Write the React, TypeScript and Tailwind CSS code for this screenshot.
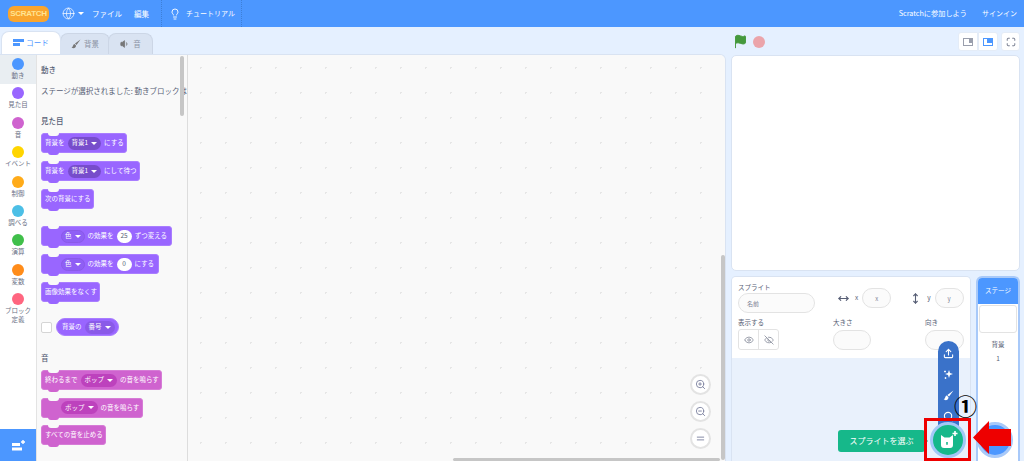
import { Globe, Lightbulb, Upload, Search, Eye, EyeOff, Maximize, ZoomIn, ZoomOut, Equal, Volume1, MoveHorizontal, MoveVertical, Flag } from "lucide-react";
import type { ReactNode } from "react";

const categories = [
  { label: "動き", color: "bg-[#4c97ff]", active: true },
  { label: "見た目", color: "bg-[#9966ff]" },
  { label: "音", color: "bg-[#cf63cf]" },
  { label: "イベント", color: "bg-[#ffd500]" },
  { label: "制御", color: "bg-[#ffab19]" },
  { label: "調べる", color: "bg-[#4cbfe6]" },
  { label: "演算", color: "bg-[#40bf4a]" },
  { label: "変数", color: "bg-[#ff8c1a]" },
  { label: "ブロック定義", color: "bg-[#ff6680]" },
];

const Caret = () => (
  <span className="ml-[3px] inline-block h-0 w-0 border-x-[3px] border-t-[3px] border-x-transparent border-t-white" />
);

const Pill = ({ children, dark }: { children: ReactNode; dark: string }) => (
  <span className={`mx-[3px] flex h-[13px] items-center rounded-full ${dark}`}>
    {children}
    <Caret />
  </span>
);

const Num = ({ children }: { children: ReactNode }) => (
  <span className="mx-[3px] flex h-[13px] min-w-[15px] items-center justify-center rounded-full bg-white px-1 text-[#575e75]">
    {children}
  </span>
);

// stack block with the top notch and the bottom bump
const Block = ({
  width,
  bg,
  border,
  children,
  indent,
}: {
  width: string;
  bg: string;
  border: string;
  children: ReactNode;
  indent?: boolean;
}) => (
  <div className={`relative flex h-5 items-center rounded-[3px] border text-[6.5px] text-white ${width} ${bg} ${border} ${indent ? "pl-[16px]" : "pl-[3px]"}`}>
    <span className="absolute left-[6px] top-[-1px] h-[3px] w-[11px] rounded-b-[3px] bg-[#f9f9f9]" />
    <span className={`absolute bottom-[-3px] left-[6px] h-[3px] w-[11px] rounded-b-[3px] ${bg}`} />
    <span className="flex items-center whitespace-nowrap">{children}</span>
  </div>
);

const purple = { bg: "bg-[#9966ff]", border: "border-[#a97dff]" };
const pink = { bg: "bg-[#cf63cf]", border: "border-[#d67cd6]" };

const Field = ({ w, label }: { w: string; label?: string }) => (
  <div className={`flex h-[20px] items-center justify-center rounded-full border border-[#e3e3e3] bg-[#fbfbfb] text-[6px] text-[#7b8194] ${w}`}>
    {label}
  </div>
);

const MenuIcon = ({ children }: { children: ReactNode }) => (
  <div className="flex h-[21px] items-center justify-center text-white">{children}</div>
);

export default function App() {
  return (
    <div className="relative flex h-[461px] w-[1024px] flex-col overflow-hidden bg-[#e5f0ff] font-['Noto_Sans_CJK_JP','Noto_Sans',sans-serif] text-[7px] text-[#575e75]">
      {/* Header */}
      <header className="flex h-[27px] shrink-0 items-center bg-[#4c97ff] pl-2 pr-[7px] text-[7.5px] text-white">
        <div className="flex h-[16px] w-[41px] items-center justify-center rounded-[6px] bg-[#f9a52e] font-['Liberation_Sans',sans-serif] text-[8px] font-bold leading-none tracking-[-0.3px] text-[#ffe493]">
          SCRATCH
        </div>
        <Globe size={13} strokeWidth={1.3} className="ml-[13px]" />
        <span className="ml-[3px] h-0 w-0 border-x-[3px] border-t-[3px] border-x-transparent border-t-white" />
        <span className="ml-[8px]">ファイル</span>
        <span className="ml-[12px]">編集</span>
        <span className="ml-[12px] h-full border-l border-dotted border-[#3d7fd8]" />
        <Lightbulb size={12} strokeWidth={1.8} className="ml-[7px]" />
        <span className="ml-[5px] text-[7px]">チュートリアル</span>
        <span className="ml-[6px] h-full border-l border-dotted border-[#3d7fd8]" />
        <span className="ml-auto text-[7.2px]">Scratchに参加しよう</span>
        <span className="ml-[15px] text-[7px]">サインイン</span>
      </header>

      <div className="flex min-h-0 flex-1">
        {/* Left side: tabs + editor */}
        <div className="flex w-[726px] shrink-0 flex-col">
          <div className="flex h-[27px] shrink-0 items-end pl-[1px] text-[7.5px]">
            <div className="z-10 flex h-[23px] w-[60px] items-center justify-center gap-[2px] rounded-t-[8px] border border-b-0 border-[#d9e3f2] bg-white text-[#4c97ff]">
              <svg width="11" height="8" viewBox="0 0 11 8">
                <path d="M0 0h11v3H0zM0 4h7v3H0z" fill="#4c97ff" />
              </svg>
              コード
            </div>
            <div className="ml-[-1px] flex h-[21px] w-[50px] items-center justify-center gap-[3px] rounded-t-[8px] border border-b-0 border-[#ccd6e6] bg-[#d9e3f2] text-[#8c93a5]">
              <svg width="10" height="10" viewBox="0 0 10 10">
                <path d="M9.500.5L4 4.500l1.500 1.500zM3.500 5C1.500 5.500 2.500 8 .5 8.500c2 1.500 4.500.5 4.500-2z" fill="#777" />
              </svg>
              背景
            </div>
            <div className="ml-[-2px] flex h-[21px] w-[45px] items-center justify-center gap-[3px] rounded-t-[8px] border border-b-0 border-[#ccd6e6] bg-[#d9e3f2] text-[#8c93a5]">
              <Volume1 size={10} fill="#777" className="text-[#777]" />音
            </div>
          </div>

          <div className="flex min-h-0 flex-1 overflow-hidden rounded-tr-[6px] border-t border-r border-[#d9e3f2]">
            {/* Category column */}
            <div className="relative flex w-[37px] shrink-0 flex-col border-r border-[#e3e3e3] bg-white">
              {categories.map((c) => (
                <div
                  key={c.label}
                  className={`flex h-[29.4px] shrink-0 flex-col items-center pt-[3px] text-center text-[6.5px] leading-[9px] text-[#6a7085] ${c.active ? "bg-[#e9eef2]" : ""}`}
                >
                  <span className={`h-[12px] w-[12px] shrink-0 rounded-full ${c.color}`} />
                  <span className="mt-[1px] w-[32px]">{c.label}</span>
                </div>
              ))}
              <div className="mt-auto flex h-[32px] items-center justify-center bg-[#4c97ff]">
                <svg width="15" height="13" viewBox="0 0 15 13">
                  <path d="M1 4h8v3H1zM1 8.500h10v3H1z" fill="#fff" />
                  <path d="M12 1v4M10 3h4" stroke="#fff" strokeWidth="1.400" />
                </svg>
              </div>
            </div>

            {/* Palette */}
            <div className="relative w-[151px] shrink-0 overflow-hidden border-r border-[#dddddd] bg-[#f9f9f9] pl-[4px] pt-[9px]">
              <div className="absolute right-[3px] top-[1px] h-[60px] w-[4px] rounded-full bg-[#c6c6c6]" />
              <div className="h-[12px] text-[7.5px] font-medium leading-[12px] text-[#575e75]">動き</div>
              <div className="mt-[9px] h-[12px] whitespace-nowrap text-[7.5px] leading-[12px]">ステージが選択されました: 動きブロックは</div>
              <div className="mt-[18px] h-[12px] text-[7.5px] font-medium leading-[12px]">見た目</div>
              <div className="mt-[6px] flex flex-col gap-[8px]">
                <Block width="w-[86px]" {...purple}>背景を<Pill dark="bg-[#774dcb] px-[4px]">背景1</Pill>にする</Block>
                <Block width="w-[99px]" {...purple}>背景を<Pill dark="bg-[#774dcb] px-[4px]">背景1</Pill>にして待つ</Block>
                <Block width="w-[53px]" {...purple}>次の背景にする</Block>
              </div>
              <div className="mt-[17px] flex flex-col gap-[8px]">
                <Block width="w-[131px]" indent {...purple}>
                  <Pill dark="border border-[#8a5ae8] bg-[#8f5ff5] px-[3px]">色</Pill>の効果を<Num>25</Num>ずつ変える
                </Block>
                <Block width="w-[118px]" indent {...purple}>
                  <Pill dark="border border-[#8a5ae8] bg-[#8f5ff5] px-[3px]">色</Pill>の効果を<Num>0</Num>にする
                </Block>
                <Block width="w-[59px]" {...purple}>画像効果をなくす</Block>
              </div>
              <div className="mt-[16px] flex h-[18px] items-center">
                <span className="h-[11px] w-[11px] rounded-[2px] border border-[#d5d5d5] bg-white" />
                <div className="ml-[4px] flex h-[18px] w-[63px] items-center whitespace-nowrap rounded-full border border-[#a97dff] bg-[#9966ff] pl-[5px] text-[6.5px] text-white">
                  背景の<Pill dark="bg-[#8a5ae8] px-[4px]">番号</Pill>
                </div>
              </div>
              <div className="mt-[16px] h-[12px] text-[7.5px] font-medium leading-[12px]">音</div>
              <div className="mt-[6px] flex flex-col gap-[7.500px]">
                <Block width="w-[121px]" {...pink}>終わるまで<Pill dark="bg-[#bd42bd] px-[4px]">ポップ</Pill>の音を鳴らす</Block>
                <Block width="w-[102px]" indent {...pink}><Pill dark="bg-[#bd42bd] px-[4px]">ポップ</Pill>の音を鳴らす</Block>
                <Block width="w-[65px]" {...pink}>すべての音を止める</Block>
              </div>
            </div>

            {/* Workspace */}
            <div className="relative flex-1 bg-[#f9f9f9] bg-[radial-gradient(circle,#e6e6e6_1px,transparent_1px)] bg-[length:25px_25px]">
              <div className="absolute bottom-[1px] right-0 top-[200px] w-[4px] rounded-full bg-[#c6c6c6]" />
              <div className="absolute bottom-0 left-[265px] right-[5px] h-[3px] rounded-full bg-[#c6c6c6]" />
              <div className="absolute bottom-[12px] right-[14px] flex flex-col gap-[6px] text-[#7d82a0]">
                {[ZoomIn, ZoomOut, Equal].map((Icon, i) => (
                  <div key={i} className="flex h-[21px] w-[21px] items-center justify-center rounded-full border-2 border-[#e3e3e3] bg-white">
                    <Icon size={11} strokeWidth={2} />
                  </div>
                ))}
              </div>
            </div>
          </div>
        </div>

        {/* Right side */}
        <div className="ml-[5px] flex w-[289px] shrink-0 flex-col">
          <div className="flex h-[28px] shrink-0 items-center pt-[1px]">
            <Flag size={15} fill="#45993d" strokeWidth={1.5} className="ml-[2px] text-[#45993d]" />
            <span className="ml-[5px] h-[12px] w-[12px] rounded-full bg-[#eba4aa]" />
            <div className="ml-auto flex">
              <div className="flex h-[19px] w-[20px] items-center justify-center rounded-l-[3px] border border-[#e4ecf7] bg-white">
                <span className="flex h-[8px] w-[10px] justify-end border border-[#9a9fad]">
                  <span className="h-[4px] w-[3px] bg-[#9a9fad]" />
                </span>
              </div>
              <div className="flex h-[19px] w-[20px] items-center justify-center rounded-r-[3px] border border-[#e4ecf7] bg-white">
                <span className="flex h-[8px] w-[10px] justify-end border border-[#4c97ff]">
                  <span className="h-[4px] w-[5px] bg-[#4c97ff]" />
                </span>
              </div>
              <div className="ml-[3px] flex h-[19px] w-[19px] items-center justify-center rounded-[3px] border border-[#e4ecf7] bg-white text-[#575e75]">
                <Maximize size={10} strokeWidth={2} />
              </div>
            </div>
          </div>

          <div className="h-[216px] shrink-0 rounded-[5px] border border-[#d9e3f2] bg-white" />

          <div className="mt-[5px] flex min-h-0 flex-1 gap-[5px]">
            {/* Sprite info */}
            <div className="flex w-[240px] shrink-0 flex-col overflow-hidden rounded-t-[5px] border border-b-0 border-[#d9e3f2] bg-[#e9f1fc]">
              <div className="h-[81px] shrink-0 bg-white px-[6px] pt-[4px] text-[6.5px]">
                <div className="flex">
                  <div className="w-[78px]">
                    <div className="h-[12px] leading-[12px]">スプライト</div>
                    <Field w="w-[77px] justify-start pl-[8px]" label="名前" />
                  </div>
                  <div className="ml-[22px] mt-[7px] flex h-[20px] items-center">
                    <MoveHorizontal size={11} strokeWidth={2.4} />
                    <span className="ml-[6px] mr-[4px] text-[6.5px]">x</span>
                    <Field w="w-[29px]" label="x" />
                    <MoveVertical size={11} strokeWidth={2.4} className="ml-[19px]" />
                    <span className="ml-[6px] mr-[4px] text-[6.5px]">y</span>
                    <Field w="w-[29px]" label="y" />
                  </div>
                </div>
                <div className="mt-[3px] flex">
                  <div className="w-[95px]">
                    <div className="h-[12px] leading-[12px]">表示する</div>
                    <div className="mt-[1px] flex h-[21px] w-[41px] rounded-[3px] border border-[#e3e3e3] text-[#8a8f9e]">
                      <span className="flex flex-1 items-center justify-center border-r border-[#e3e3e3]"><Eye size={10} /></span>
                      <span className="flex flex-1 items-center justify-center"><EyeOff size={10} /></span>
                    </div>
                  </div>
                  <div className="w-[92px]">
                    <div className="h-[12px] leading-[12px]">大きさ</div>
                    <Field w="mt-[2px] w-[38px]" />
                  </div>
                  <div>
                    <div className="h-[12px] leading-[12px]">向き</div>
                    <Field w="mt-[2px] w-[39px]" />
                  </div>
                </div>
              </div>
            </div>

            {/* Stage selector */}
            <div className="flex w-[44px] shrink-0 flex-col overflow-hidden rounded-t-[6px] border-2 border-b-0 border-[#a8c9f9] bg-white text-center text-[6.5px]">
              <div className="flex h-[26px] shrink-0 items-center justify-center bg-[#4c97ff] text-white">ステージ</div>
              <div className="mx-[1px] mt-[1px] h-[28px] shrink-0 rounded-[3px] border border-[#e3e3e3]" />
              <div className="mt-[6px] h-[10px] leading-[10px]">背景</div>
              <div className="mt-[4px] h-[10px] leading-[10px]">1</div>
            </div>
          </div>
        </div>
      </div>

      {/* Stage's add button, mostly behind the arrow */}
      <div className="absolute left-[977px] top-[422px] h-[36px] w-[36px] rounded-full border-[3px] border-[#a8c9f9] bg-[#4c97ff]" />

      {/* Sprite chooser fly-out */}
      <div className="absolute left-[938px] top-[341px] h-[100px] w-[21px] rounded-t-full bg-[#3a72c9] pt-[2px]">
        <MenuIcon><Upload size={11} strokeWidth={2.4} /></MenuIcon>
        <MenuIcon>
          <svg width="11" height="11" viewBox="0 0 11 11">
            <path d="M6 1l1 3 3 1-3 1-1 3-1-3-3-1 3-1z" fill="#fff" />
            <path d="M2 1.500v2M1 2.500h2M2.500 8v2M1.500 9h2" stroke="#fff" strokeWidth=".8" />
          </svg>
        </MenuIcon>
        <MenuIcon>
          <svg width="11" height="11" viewBox="0 0 10 10">
            <path d="M9.500.5L4 4.500l1.500 1.500zM3.500 5C1.500 5.500 2.500 8 .5 8.500c2 1.500 4.500.5 4.500-2z" fill="#fff" />
          </svg>
        </MenuIcon>
        <MenuIcon><Search size={11} strokeWidth={2.4} /></MenuIcon>
      </div>
      <div className="absolute left-[838px] top-[430px] flex h-[22px] w-[87px] items-center justify-center rounded-[3px] bg-[#16b88a] text-[8px] text-white">
        スプライトを選ぶ
      </div>
      <div className="absolute left-[925px] top-[438px] h-0 w-0 border-y-[3px] border-l-[3px] border-y-transparent border-l-[#16b88a]" />
      <div className="absolute left-[930px] top-[422px] flex h-[36px] w-[36px] items-center justify-center rounded-full border-[3px] border-[#a3c8f7] bg-[#16b88a]">
        <svg width="22" height="20" viewBox="0 0 22 20">
          <path d="M4 5l3.500 2.500h5L16 5v10a3 3 0 0 1-3 3H7a3 3 0 0 1-3-3z" fill="#fff" />
          <path d="M9 13h2M10 12v3" stroke="#16b88a" strokeWidth="1.200" />
          <path d="M18 1v5M15.500 3.500h5" stroke="#fff" strokeWidth="1.600" />
        </svg>
      </div>

      {/* Annotation */}
      <div className="absolute left-[924px] top-[418px] h-[43px] w-[47px] border-[3px] border-[#ee0000]" />
      <div className="absolute left-[954px] top-[391px] text-[23px] font-bold leading-[28px] text-black">①</div>
      <svg className="absolute left-[972px] top-[420px]" width="40" height="35" viewBox="0 0 40 35">
        <path d="M1 17.500L17 1v8h22v17H17v8z" fill="#ee0000" />
      </svg>
    </div>
  );
}
